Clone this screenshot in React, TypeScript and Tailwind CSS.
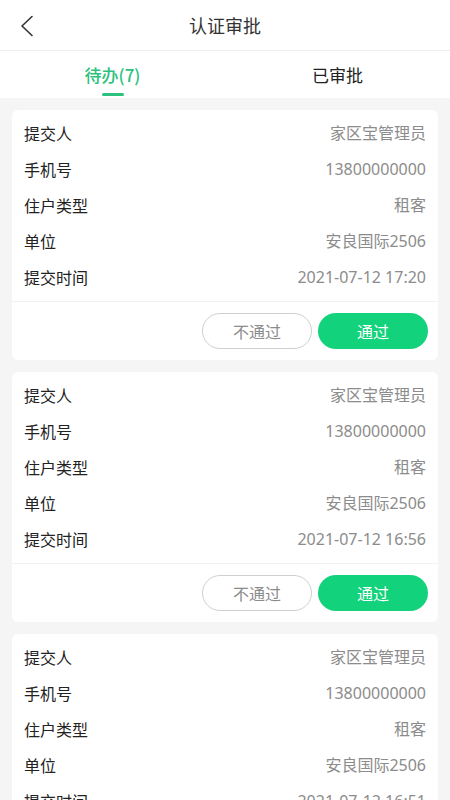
import React from "react";

type Record = {
    submitter: string;
    phone: string;
    type: string;
    unit: string;
    time: string;
};

const records: Record[] = [
    { submitter: "家区宝管理员", phone: "13800000000", type: "租客", unit: "安良国际2506", time: "2021-07-12 17:20" },
    { submitter: "家区宝管理员", phone: "13800000000", type: "租客", unit: "安良国际2506", time: "2021-07-12 16:56" },
    { submitter: "家区宝管理员", phone: "13800000000", type: "租客", unit: "安良国际2506", time: "2021-07-12 16:51" },
];

const Row = ({ label, value }: { label: string; value: string }) => (
    <div className="flex h-9 items-center justify-between">
        <span className="text-[16px] text-[#222]">{label}</span>
        <span className="font-['Noto_Sans','Noto_Sans_CJK_SC',sans-serif] text-[16px] text-[#8c8c8c]">
            {value}
        </span>
    </div>
);

const Card = ({ r }: { r: Record }) => (
    <div className="rounded-[6px] bg-white">
        <div className="px-3 pt-[5px] pb-[6px]">
            <Row label="提交人" value={r.submitter} />
            <Row label="手机号" value={r.phone} />
            <Row label="住户类型" value={r.type} />
            <Row label="单位" value={r.unit} />
            <Row label="提交时间" value={r.time} />
        </div>
        <div className="flex justify-end gap-[6px] border-t border-[#f2f2f2] px-[10px] pt-[11px] pb-[11px]">
            <button className="h-9 w-[110px] rounded-full border border-[#cfcfcf] bg-white text-[16px] text-[#8c8c8c]">
                不通过
            </button>
            <button className="h-9 w-[110px] rounded-full bg-[#12d27b] text-[16px] text-white">
                通过
            </button>
        </div>
    </div>
);

export default function App() {
    return (
        <div
            className="flex h-[800px] w-[450px] flex-col overflow-hidden bg-[#f5f5f5]"
            style={{ fontFamily: '"Noto Sans CJK SC", "Noto Sans", sans-serif' }}
        >
            <div className="relative flex h-[51px] shrink-0 items-center justify-center border-b border-[#eeeeee] bg-white">
                <svg
                    className="absolute left-[18px] top-[15px]"
                    width="18"
                    height="22"
                    viewBox="0 0 18 22"
                    fill="none"
                >
                    <path d="M14 1.5 L4 11 L14 20.5" stroke="#333" strokeWidth="1.6" strokeLinecap="round" strokeLinejoin="round" />
                </svg>
                <span className="text-[18px] text-[#333]">认证审批</span>
            </div>
            <div className="flex h-[47px] shrink-0 bg-white">
                <div className="relative flex flex-1 items-center justify-center">
                    <span className="text-[17px] font-medium text-[#2cc27e]">待办(7)</span>
                    <span className="absolute bottom-[2px] h-[3px] w-[22px] rounded-full bg-[#2cc27e]" />
                </div>
                <div className="flex flex-1 items-center justify-center">
                    <span className="text-[17px] text-[#222]">已审批</span>
                </div>
            </div>
            <div className="flex flex-col gap-3 px-3 pt-3">
                {records.map((r, i) => (
                    <Card key={i} r={r} />
                ))}
            </div>
        </div>
    );
}
